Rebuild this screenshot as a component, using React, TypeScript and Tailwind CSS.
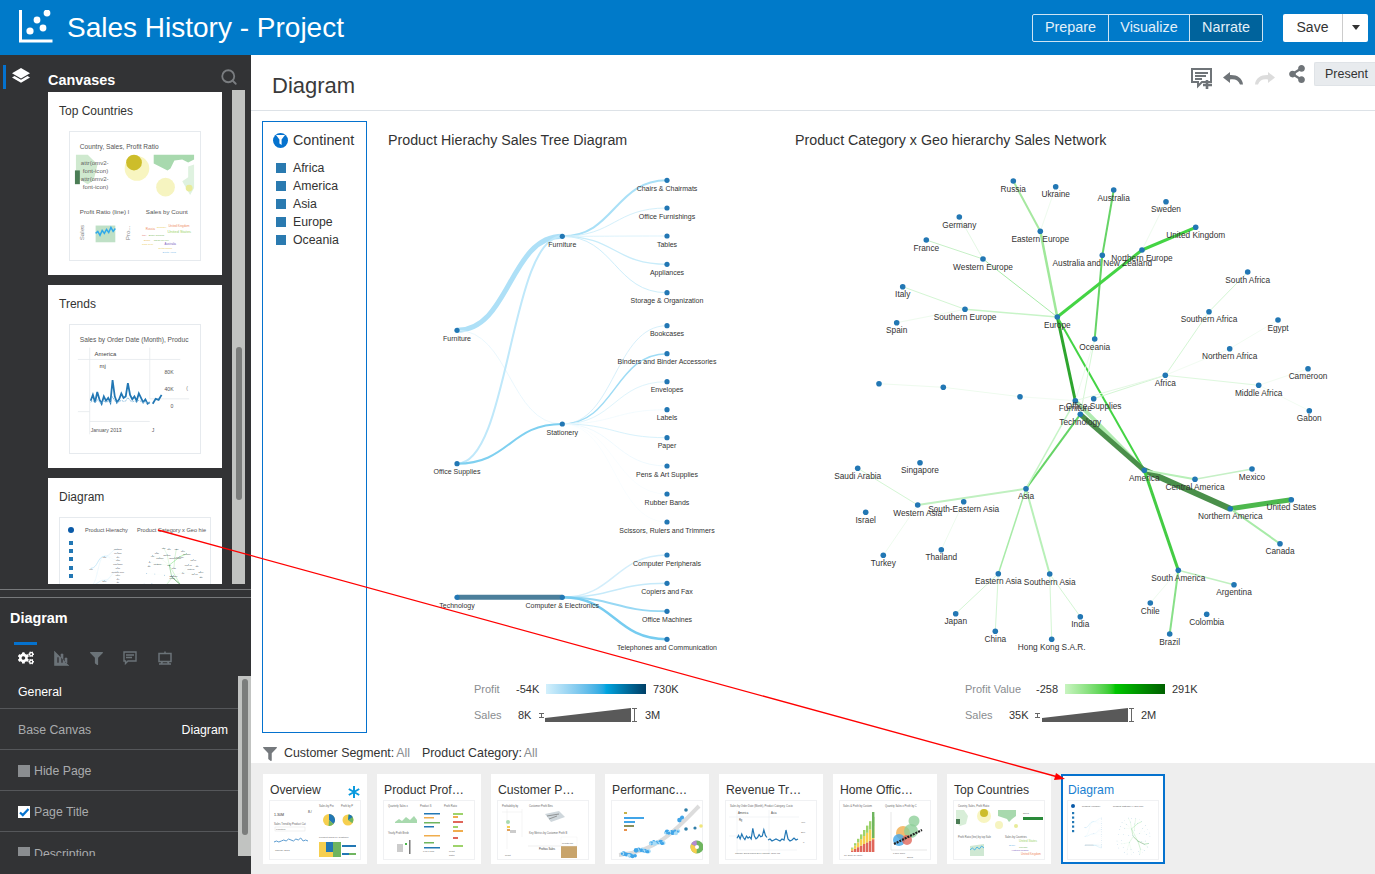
import { FaCogs, FaFilter, FaShareAlt } from "react-icons/fa";
import { Search } from "lucide-react";

type Node = [number, number, string, number?];
type Edge = [number, number, number, number, string, number];

// tree chart, page coordinates
const X0 = 457;
const X1 = 562.3;
const X2 = 667;
const treeRoots: Node[] = [
  [X0, 330.3, "Furniture"],
  [X0, 463.7, "Office Supplies"],
  [X0, 597.3, "Technology"],
];
const treeMiddle: Node[] = [
  [X1, 236.3, "Furniture"],
  [X1, 424, "Stationery"],
  [X1, 597.3, "Computer & Electronics"],
];
const treeLeaves: [number, string, number, string, number][] = [
  [180.3, "Chairs & Chairmats", 0, "#a9e0f7", 2],
  [208, "Office Furnishings", 0, "#d4f0fb", 1],
  [236, "Tables", 0, "#ddf3fc", 1],
  [264.3, "Appliances", 0, "#c8ecfa", 1.3],
  [292.7, "Storage & Organization", 0, "#cdeefb", 1],
  [325.7, "Bookcases", 1, "#d7f0fb", 1],
  [353.7, "Binders and Binder Accessories", 1, "#9fdcf5", 1.5],
  [381.7, "Envelopes", 1, "#def4fc", 1],
  [409.7, "Labels", 1, "#eef9fe", 0.7],
  [437.7, "Paper", 1, "#d8f2fc", 1],
  [466, "Pens & Art Supplies", 1, "#e8f7fd", 0.7],
  [494, "Rubber Bands", 1, "#f2fafe", 0.5],
  [522, "Scissors, Rulers and Trimmers", 1, "#f2fafe", 0.5],
  [555, "Computer Peripherals", 2, "#d3eefb", 1.5],
  [583.3, "Copiers and Fax", 2, "#c6eafa", 1.5],
  [611.3, "Office Machines", 2, "#97d8f4", 2],
  [639.3, "Telephones and Communication", 2, "#76ccf0", 2.5],
];
const treeLinks: [number, number, string, number][] = [
  [0, 0, "#aee0f7", 5],
  [0, 1, "#e4f5fd", 0.8],
  [1, 0, "#bfe8fa", 2],
  [1, 1, "#7fd0f0", 2],
  [2, 2, "#4b7f9b", 5],
];

function curve(x1: number, y1: number, x2: number, y2: number) {
  const mx = (x1 + x2) / 2;
  return `M${x1} ${y1}C${mx} ${y1} ${mx} ${y2} ${x2} ${y2}`;
}

function TreeChart({ labels = true }: { labels?: boolean }) {
  const all: Node[] = [...treeRoots, ...treeMiddle, ...treeLeaves.map((l): Node => [X2, l[0], l[1]])];
  return (
    <g>
      {treeLinks.map(([a, b, c, w], i) => (
        <path key={i} d={curve(X0, treeRoots[a][1], X1, treeMiddle[b][1])} fill="none" stroke={c} strokeWidth={w} />
      ))}
      {treeLeaves.map((l, i) => (
        <path key={i} d={curve(X1, treeMiddle[l[2]][1], X2, l[0])} fill="none" stroke={l[3]} strokeWidth={l[4]} />
      ))}
      {all.map(([x, y, t], i) => (
        <g key={i}>
          <circle cx={x} cy={y} r={2.6} fill="#2277b4" />
          {labels && (
            <text x={x} y={y + 10.5} textAnchor="middle" fontSize={7} fill="#333">
              {t}
            </text>
          )}
        </g>
      ))}
    </g>
  );
}

// network chart, page coordinates: x, y, label
const netNodes: Node[] = [
  [1013.3, 181, "Russia"], [1055.7, 186.7, "Ukraine"], [1113.7, 190, "Australia"], [1166, 201.7, "Sweden"],
  [959.3, 217, "Germany"], [926.3, 240, "France"], [1040.3, 231.3, "Eastern Europe"], [1195.7, 227.3, "United Kingdom"],
  [1142, 250, "Northern Europe"], [1102.3, 255.3, "Australia and New Zealand"], [983, 259, "Western Europe"],
  [1247.7, 272, "South Africa"], [902.7, 286.7, "Italy"], [965, 309.3, "Southern Europe"], [896.7, 322.7, "Spain"],
  [1057.3, 317, "Europe"], [1209, 311.7, "Southern Africa"], [1278, 320, "Egypt"], [1094.7, 339, "Oceania"],
  [1229.7, 348.7, "Northern Africa"], [1308, 368.7, "Cameroon"], [1165.3, 375.3, "Africa"], [1258.7, 385.3, "Middle Africa"],
  [879, 383.7, ""], [943.3, 387.3, ""], [1020, 396.7, ""],
  [1075.3, 400.7, "Furniture"], [1093.7, 398.7, "Office Supplies"], [1080.3, 414.3, "Technology"], [1309.3, 410.7, "Gabon"],
  [857.7, 468.3, "Saudi Arabia"], [920, 462.7, "Singapore"], [1144.3, 470.3, "America"], [1195, 479.3, "Central America"],
  [1252, 469, "Mexico"], [1026, 488.7, "Asia"], [1230.3, 508.7, "Northern America"], [1291.3, 499.7, "United States"],
  [917.7, 505, "Western Asia"], [963.7, 501.7, "South-Eastern Asia"], [865.7, 512.3, "Israel"], [1280, 543.7, "Canada"],
  [941.3, 549.7, "Thailand"], [883.3, 555.3, "Turkey"], [998.3, 573.7, "Eastern Asia"], [1049.7, 574, "Southern Asia"],
  [1178.3, 570.3, "South America"], [1234, 584.7, "Argentina"], [1150.3, 603, "Chile"], [1206.7, 614.3, "Colombia"],
  [955.7, 613.7, "Japan"], [1080.3, 616.7, "India"], [995.3, 631.3, "China"], [1051.7, 639.3, "Hong Kong S.A.R."],
  [1169.7, 634, "Brazil"],
];

const P = (name: string) => netNodes.find((n) => n[2] === name) as Node;
const netLinks: [string, string, string, number][] = [
  ["Eastern Europe", "Russia", "#a6e8a0", 2],
  ["Eastern Europe", "Ukraine", "#eefbee", 1],
  ["Europe", "Eastern Europe", "#a0e89a", 2.5],
  ["Oceania", "Australia and New Zealand", "#66d466", 2],
  ["Australia and New Zealand", "Australia", "#66d466", 2],
  ["Europe", "Northern Europe", "#44d444", 3],
  ["Northern Europe", "United Kingdom", "#44d444", 3],
  ["Northern Europe", "Sweden", "#eefbee", 1],
  ["Europe", "Western Europe", "#a8eba8", 1],
  ["Western Europe", "France", "#c6f0c6", 1],
  ["Western Europe", "Germany", "#e4f8e4", 1],
  ["Europe", "Southern Europe", "#c8f4c8", 1.5],
  ["Southern Europe", "Italy", "#d4f6d4", 1],
  ["Southern Europe", "Spain", "#eefbee", 1],
  ["Europe", "Furniture", "#2ea52e", 3],
  ["Europe", "America", "#44d444", 2],
  ["Furniture", "America", "#b0ecb0", 4],
  ["Technology", "America", "#4a8f4a", 5],
  ["America", "Northern America", "#4a8f4a", 6],
  ["Northern America", "United States", "#4db84d", 5],
  ["Northern America", "Canada", "#a8eba8", 2],
  ["America", "Central America", "#b8f0b8", 2],
  ["Central America", "Mexico", "#c6f0c6", 1.5],
  ["America", "South America", "#44cc44", 3],
  ["South America", "Argentina", "#c0f0c0", 1.5],
  ["South America", "Chile", "#eefbee", 1],
  ["South America", "Brazil", "#88e088", 2],
  ["Technology", "Asia", "#66d466", 2],
  ["Furniture", "Asia", "#c6f4c6", 1.5],
  ["Asia", "Western Asia", "#c0f0c0", 2],
  ["Western Asia", "Saudi Arabia", "#d4f6d4", 1],
  ["Western Asia", "Turkey", "#eefbee", 1],
  ["South-Eastern Asia", "Thailand", "#eefbee", 1],
  ["Asia", "Eastern Asia", "#a8eba8", 1.5],
  ["Asia", "Southern Asia", "#b8f0b8", 2],
  ["Eastern Asia", "Japan", "#d4f6d4", 1],
  ["Eastern Asia", "China", "#d4f6d4", 1],
  ["Southern Asia", "Hong Kong S.A.R.", "#d4f6d4", 1],
  ["Southern Asia", "India", "#d4f6d4", 1],
  ["Oceania", "Technology", "#d4f6d4", 1],
  ["Oceania", "Furniture", "#eefbee", 1],
  ["Africa", "Office Supplies", "#d4f6d4", 1],
  ["Africa", "Furniture", "#e4f8e4", 1],
  ["Africa", "Southern Africa", "#d4f6d4", 1],
  ["Southern Africa", "South Africa", "#d4f6d4", 1],
  ["Africa", "Northern Africa", "#f2fcf2", 1],
  ["Northern Africa", "Egypt", "#f2fcf2", 1],
  ["Africa", "Middle Africa", "#def8de", 1],
  ["Middle Africa", "Cameroon", "#f2fcf2", 1],
  ["Middle Africa", "Gabon", "#f2fcf2", 1],
];

function NetworkChart({ labels = true }: { labels?: boolean }) {
  const extra: Edge[] = [
    [879, 383.7, 943.3, 387.3, "#eefbee", 1],
    [943.3, 387.3, 1020, 396.7, "#eefbee", 1],
    [1020, 396.7, 1075.3, 400.7, "#f2fcf2", 1],
  ];
  return (
    <g>
      {extra.map(([a, b, c, d, s, w], i) => (
        <line key={i} x1={a} y1={b} x2={c} y2={d} stroke={s} strokeWidth={w} />
      ))}
      {netLinks.map(([a, b, s, w], i) => {
        const p = P(a);
        const q = P(b);
        return <line key={i} x1={p[0]} y1={p[1]} x2={q[0]} y2={q[1]} stroke={s} strokeWidth={w} />;
      })}
      {netNodes.map(([x, y], i) => (
        <circle key={i} cx={x} cy={y} r={2.8} fill="#2277b4" />
      ))}
      {labels &&
        netNodes.map(([x, y, t], i) => (
          <text key={i} x={x} y={y + 10.5} textAnchor="middle" fontSize={8.3} fill="#333">
            {t}
          </text>
        ))}
    </g>
  );
}

function jag(x: number, y: number, w: number, vals: number[]) {
  return vals.map((v, i) => `${x + (i * w) / (vals.length - 1)},${y - v}`).join(" ");
}
const wave = [4, 8, 3, 10, 5, 2, 7, 4, 6, 3, 18, 7, 3, 5, 9, 6, 7, 16, 8, 5, 7, 4, 9, 6, 3, 5, 2, 3, 1, 0, 2, 3];

function Tx({ x, y, s = 4, c = "#666", t }: { x: number; y: number; s?: number; c?: string; t: string }) {
  return (
    <text x={x} y={y} fontSize={s} fill={c}>
      {t}
    </text>
  );
}

function TopCountriesBig() {
  return (
    <svg viewBox="0 0 132 130" className="block h-full w-full">
      <Tx x={10} y={17} s={6.7} c="#555" t="Country, Sales, Profit Ratio" />
      <path d="M6 23h12l10 10-4 16-6 4-12-7z" fill="#cfe9cf" />
      <rect x="5" y="39" width="5" height="14" fill="#4b7d55" />
      <Tx x={11} y={34} s={6.2} t="attr(omv2-" />
      <Tx x={13} y={42} s={6.2} t="font-icon)" />
      <Tx x={11} y={50} s={6.2} t="attr(omv2-" />
      <Tx x={13} y={58} s={6.2} t="font-icon)" />
      <circle cx="68" cy="37" r="12.5" fill="#f8f5c0" />
      <circle cx="65" cy="31" r="8" fill="#cdbd2a" />
      <path d="M85 23h41v5l-6 3-6-3-8 1-4 8-3 2-14-7z" fill="#a8d9ae" />
      <path d="M120 35l6-2v24l-4 7-8-14 6-4z" fill="#dff2e0" />
      <circle cx="97" cy="56" r="9.5" fill="#f6f4c0" />
      <circle cx="121" cy="57" r="3.5" fill="#e8eb9a" />
      <Tx x={10} y={83} s={6.3} c="#555" t="Profit Ratio (line) l" />
      <Tx x={77} y={83} s={6.3} c="#555" t="Sales by Count" />
      <text transform="translate(14,110) rotate(-90)" fontSize="6.3" fill="#888">Sales</text>
      <rect x="26" y="95" width="20" height="17" fill="#bfe0c6" />
      <polyline points={jag(26, 104, 20, [1, 3, -1, 4, 1, 5, 2, 7, 3, 6])} fill="none" stroke="#30a9ea" strokeWidth="1.5" />
      <text transform="translate(61,110) rotate(-90)" fontSize="6.3" fill="#888">Pro...</text>
      <Tx x={100} y={96} s={3} c="#ef8a5d" t="United Kingdom" />
      <Tx x={77} y={100} s={3} c="#ef8a5d" t="Russia" />
      <Tx x={88} y={98} s={2.4} c="#e8c84a" t="Germany" />
      <Tx x={99} y={103} s={4} c="#9ed36b" t="United States" />
      <Tx x={73} y={106} s={2.5} c="#e0665a" t="Italy" />
      <Tx x={80} y={106} s={2.5} c="#7cb860" t="Brazil  Canada" />
      <Tx x={75} y={111} s={2.5} c="#e8b74a" t="Spain" />
      <Tx x={85} y={111} s={2.5} c="#7cb860" t="Japan   Mexico" />
      <Tx x={73} y={115} s={2.5} c="#e8c84a" t="India  Peru" />
      <Tx x={96} y={115} s={3} c="#7a5cc0" t="Australia" />
      <Tx x={90} y={119} s={2.5} c="#e8c84a" t="Netherlands" />
      <Tx x={94} y={123} s={2.5} c="#72b5e8" t="South Africa" />
    </svg>
  );
}

function TrendsBig() {
  return (
    <svg viewBox="0 0 132 130" className="block h-full w-full">
      <Tx x={10} y={17} s={6.7} c="#555" t="Sales by Order Date (Month), Produc" />
      <path d="M8 35h104M20 23v88M81 23v52h15M8 88h12M96 75h25M20 98h61" fill="none" stroke="#e4e8ec" strokeWidth="0.8" />
      <Tx x={25} y={31} s={6} c="#444" t="America" />
      <Tx x={30} y={44} s={6} c="#444" t="mj" />
      <polyline points={jag(21, 88, 60, wave.slice(0, 28).map((v) => v * 1.5 + 5))} fill="none" stroke="#2277b4" strokeWidth="1.8" />
      <polyline points={jag(21, 88, 60, wave.slice(0, 28).map((v) => v * 0.4 + 8))} fill="none" stroke="#7fb6dc" strokeWidth="0.9" strokeDasharray="2 1" />
      <polyline points="84,80 87,75 90,76 93,71" fill="none" stroke="#2277b4" strokeWidth="1.8" />
      <Tx x={96} y={50} s={5.2} c="#555" t="80K" />
      <Tx x={96} y={67} s={5.2} c="#555" t="40K" />
      <Tx x={102} y={84} s={5.2} c="#555" t="0" />
      <Tx x={118} y={66} s={5.2} c="#777" t="(" />
      <Tx x={21} y={109} s={5.2} c="#555" t="January 2013" />
      <Tx x={83} y={109} s={5.2} c="#555" t="J" />
    </svg>
  );
}

function DiagramSide() {
  return (
    <svg viewBox="0 0 152 90" className="block h-[90px] w-[152px]">
      <circle cx="11" cy="12" r="3" fill="#0a5aa8" />
      {[23, 31, 39, 48, 56].map((y) => (
        <rect key={y} x="9" y={y} width="4" height="4" fill="#2277b4" />
      ))}
      <Tx x={25} y={14} s={5.6} c="#555" t="Product Hierachy" />
      <Tx x={77} y={14} s={5.6} c="#555" t="Product Category x Geo hie" />
      <g transform="translate(-27.5,8) scale(0.128)">
        <TreeChart />
      </g>
      <g transform="translate(-24,7.2) scale(0.126)">
        <NetworkChart />
      </g>
    </svg>
  );
}

function ThumbFrame({ children }: { children: React.ReactNode }) {
  return (
    <svg viewBox="0 0 92 60" className="mx-auto mt-[1px] block h-[60px] w-[92px]">
      <rect x="0.5" y="0.5" width="91" height="59" fill="#fff" stroke="#f0f1f3" />
      {children}
    </svg>
  );
}

function pieSlice(cx: number, cy: number, r: number, a: number, b: number) {
  const x1 = cx + r * Math.sin(a);
  const y1 = cy - r * Math.cos(a);
  const x2 = cx + r * Math.sin(b);
  const y2 = cy - r * Math.cos(b);
  return `M${cx} ${cy}L${x1} ${y1}A${r} ${r} 0 ${b - a > Math.PI ? 1 : 0} 1 ${x2} ${y2}Z`;
}

function OverviewThumb() {
  return (
    <ThumbFrame>
      <Tx x={5} y={16} s={3.6} c="#333" t="1.30M" />
      <Tx x={39} y={13} s={3.4} c="#333" t="8./" />
      <Tx x={5} y={25} s={2.6} t="Sales Trend by Product Cat" />
      <Tx x={50} y={7} s={2.6} t="Sales by Pro" />
      <Tx x={72} y={7} s={2.6} t="Profit by P" />
      <rect x="6" y="27" width="30" height="4" fill="#fff" stroke="#ddd" strokeWidth="0.4" />
      <Tx x={7} y={30.4} s={2.4} t="Furniture" />
      <polyline points={jag(5, 43, 34, [1, 2, 1, 2, 3, 2, 4, 3, 2, 4, 3, 5, 2, 3, 2])} fill="none" stroke="#5b9bd0" strokeWidth="1" />
      <Tx x={6} y={51} s={2.4} t="January 2013" />
      <circle cx="60" cy="20" r="6" fill="#f6cf4f" />
      <path d={pieSlice(60, 20, 6, 0, 2.3)} fill="#2277b4" />
      <path d={pieSlice(60, 20, 6, 2.3, 3.2)} fill="#6fb55f" />
      <circle cx="79" cy="20" r="5.5" fill="#f6cf4f" />
      <path d={pieSlice(79, 20, 5.5, 0, 2.2)} fill="#6fb55f" />
      <path d={pieSlice(79, 20, 5.5, 0.2, 1)} fill="#2277b4" />
      <Tx x={50} y={38} s={2.5} t="Product Sales by Custome" />
      <rect x="50" y="42" width="36" height="15" fill="#f6cf4f" />
      <rect x="57" y="42" width="7" height="10" fill="#2277b4" />
      <rect x="64" y="42" width="8" height="15" fill="#6fb55f" />
      <rect x="72" y="42" width="15" height="15" fill="#fff" />
      <rect x="73" y="45" width="14" height="2" fill="#2277b4" />
      <rect x="73" y="53" width="14" height="2" fill="#2277b4" />
      <rect x="80" y="53" width="7" height="2" fill="#6fb55f" />
    </ThumbFrame>
  );
}

function ProductThumb() {
  return (
    <ThumbFrame>
      <Tx x={5} y={7} s={2.6} t="Quarterly Sales x" />
      <Tx x={37} y={7} s={2.6} t="Product S" />
      <Tx x={61} y={7} s={2.6} t="Profit Ratio" />
      <path d="M12 22l4-3 3 2 4-4 4 3 4-4 3 4v3H12z" fill="#a8d9ae" />
      <Tx x={5} y={34} s={2.6} t="Yearly Profit Breib" />
      <rect x="14" y="44" width="6" height="8" fill="#ccc" />
      <rect x="26" y="40" width="1.5" height="14" fill="#777" />
      <rect x="22" y="43" width="2" height="2" fill="#4db84d" />
      {[13, 17, 22, 26, 35, 42, 47].map((y, i) => (
        <rect key={y} x="41" y={y} width={i % 2 ? 10 : 16} height="1.5" fill={i % 3 === 0 ? "#2277b4" : i % 3 === 1 ? "#f0ad4e" : "#6fb55f"} />
      ))}
      {[13, 16, 21, 26, 30, 37, 45].map((y, i) => (
        <rect key={y} x="70" y={y} width={i % 2 ? 5 : 10} height="2" fill={i % 3 === 0 ? "#9ed36b" : i % 3 === 1 ? "#f0ad4e" : "#e0665a"} />
      ))}
      <Tx x={40} y={52} s={2.4} t="0.00  1.50k" />
      <Tx x={66} y={52} s={2.4} t="Profit" />
      <Tx x={66} y={56} s={2.4} t="Ratio" />
    </ThumbFrame>
  );
}

function CustomerThumb() {
  return (
    <ThumbFrame>
      <Tx x={5} y={7} s={2.6} t="Profitability by" />
      <Tx x={32} y={7} s={2.6} t="Customer Profit Bins" />
      <path d="M10 9v40M25 9v28M5 12h20" stroke="#e8e8e8" strokeWidth="0.5" fill="none" />
      <circle cx="11" cy="22" r="2" fill="#a8d9ae" />
      <rect x="10" y="26" width="3" height="2" fill="#f6cf4f" />
      <rect x="10" y="29" width="3" height="2" fill="#e0a05a" />
      <rect x="13" y="30" width="6" height="3" fill="#ccc" />
      <path d="M48 14l14-3 6 6-14 5z" fill="#cfd7dc" />
      <path d="M50 16l12-2M52 19l8-3" stroke="#666" strokeWidth="0.6" />
      <Tx x={32} y={34} s={2.6} t="Key Metrics by Customer Profit B" />
      <path d="M31 46h40" stroke="#ddd" strokeWidth="0.5" />
      <Tx x={42} y={50} s={2.6} c="#333" t="Profitas  Sales" />
      <rect x="64" y="46" width="16" height="12" fill="#c8a46b" />
      <rect x="64" y="37" width="16" height="9" fill="#fff" stroke="#eee" strokeWidth="0.4" />
      <Tx x={65} y={44} s={2.4} t="ProfitbyCo" />
      <Tx x={8} y={56} s={2.4} t="Profit" />
    </ThumbFrame>
  );
}

// fixed pseudo-random cloud for the scatter thumbnail
const scatter: [number, number, number][] = Array.from({ length: 70 }, (_, i): [number, number, number] => {
  const t = ((i * 37) % 70) / 70;
  const jitter = (((i * 53) % 17) - 8) * 0.9;
  return [10 + t * 62, 55 - t * t * 28 - t * 4 + jitter * (0.3 + t * 0.6), 0.6 + ((i * 11) % 7) * 0.28];
});

function PerformanceThumb() {
  return (
    <ThumbFrame>
      <path d="M8 55C45 52 65 30 88 6" stroke="#dcdcdc" strokeWidth="4" fill="none" />
      <rect x="13" y="12" width="3" height="2" fill="#c8b24a" />
      <rect x="13" y="17" width="20" height="2" fill="#41a5e8" />
      <rect x="13" y="21" width="11" height="2" fill="#41a5e8" />
      <rect x="13" y="25" width="10" height="2" fill="#8a8f5a" />
      <rect x="13" y="29" width="3" height="2" fill="#e8914a" />
      {scatter.map(([x, y, r], i) => (
        <circle key={i} cx={x} cy={y} r={r} fill={i % 3 === 0 ? "#a8dcf7" : "#41a5e8"} />
      ))}
      <circle cx="75" cy="10" r="1.8" fill="#2f7ea8" />
      <circle cx="84" cy="28" r="1.6" fill="#2f7ea8" />
      <circle cx="75" cy="29" r="1.8" fill="#2f7ea8" />
      <circle cx="90" cy="26" r="1.8" fill="#f0e67a" />
      <circle cx="86" cy="47" r="6.5" fill="#6fb55f" />
      <path d={pieSlice(86, 47, 6.5, 3.2, 5.2)} fill="#f6cf4f" />
      <path d={pieSlice(86, 47, 6.5, 5.2, 6.2)} fill="#b48ad0" />
      <circle cx="86" cy="47" r="2" fill="#fff" />
    </ThumbFrame>
  );
}

function RevenueThumb() {
  return (
    <ThumbFrame>
      <Tx x={5} y={7} s={2.6} t="Sales by Order Date (Month), Product Category, Custo" />
      <path d="M4 17h70M12 10v44M44 10v44M4 36h8M12 50h60" stroke="#e4e8ec" strokeWidth="0.5" fill="none" />
      <Tx x={13} y={14} s={2.8} c="#444" t="America" />
      <Tx x={46} y={14} s={2.8} c="#444" t="Asia" />
      <Tx x={14} y={21} s={2.6} c="#444" t="Rg" />
      <polyline points={jag(12, 42, 30, wave.slice(0, 20).map((v) => v * 0.7 + 1))} fill="none" stroke="#2277b4" strokeWidth="1.2" />
      <polyline points={jag(43, 42, 30, [2, 3, 1, 2, 3, 2, 1, 3, 2, 12, 3, 1, 2, 4, 2, 3])} fill="none" stroke="#2277b4" strokeWidth="1.2" />
      <Tx x={76} y={23} s={2.4} t="40K" />
      <Tx x={76} y={33} s={2.4} t="20K" />
      <Tx x={78} y={43} s={2.4} t="0" />
      <Tx x={10} y={54} s={2.3} t="January 2013  March 2014  January 2017  Ma" />
    </ThumbFrame>
  );
}

function HomeThumb() {
  const cols = ["#e0665a", "#f6cf4f", "#9ed36b"];
  return (
    <ThumbFrame>
      <Tx x={4} y={7} s={2.6} t="Sales & Profit by Custom" />
      <Tx x={46} y={7} s={2.6} t="Quantity Sales x Profit by C" />
      {[0, 1, 2, 3, 4, 5, 6, 7].map((i) => (
        <g key={i}>
          <rect x={12 + i * 3} y={52 - (i + 1) * 1.6} width="2.4" height={(i + 1) * 1.6} fill={cols[0]} />
          <rect x={12 + i * 3} y={52 - (i + 1) * 3.2} width="2.4" height={(i + 1) * 1.6} fill={cols[1]} />
          <rect x={12 + i * 3} y={52 - (i + 1) * 4.4} width="2.4" height={(i + 1) * 1.2} fill={cols[2]} />
        </g>
      ))}
      <rect x="33" y="12" width="2.4" height="26" fill="#6fb55f" />
      <Tx x={5} y={56} s={2.3} t="Q4 2016  Q4 2017" />
      <path d="M52 12v38h36" stroke="#ccc" strokeWidth="0.5" fill="none" />
      <circle cx="75" cy="21" r="5.5" fill="#8ecf9a" opacity="0.8" />
      <circle cx="64" cy="33" r="7" fill="#f0ad4e" opacity="0.8" />
      <circle cx="72" cy="31" r="7" fill="#8ecf9a" opacity="0.8" />
      <circle cx="60" cy="40" r="6" fill="#41a5e8" opacity="0.8" />
      <circle cx="68" cy="40" r="5" fill="#e0665a" opacity="0.8" />
      <path d="M55 44l20-10 8-4" stroke="#222" strokeWidth="2.2" strokeDasharray="2 1" fill="none" />
      <Tx x={54} y={54} s={2.4} t="0  500  1000" />
      <Tx x={68} y={58} s={2.4} t="Sales" />
    </ThumbFrame>
  );
}

function TopThumb() {
  return (
    <ThumbFrame>
      <Tx x={5} y={7} s={2.6} t="Country, Sales, Profit Ratio" />
      <path d="M3 10h8l4 6-2 8-6 2-4-3z" fill="#d8eed8" />
      <rect x="3" y="19" width="4" height="5" fill="#4b7d55" />
      <circle cx="31" cy="16" r="7" fill="#f8f5c0" />
      <circle cx="31" cy="13" r="4" fill="#cdbd2a" />
      <path d="M45 10h18v6l-4 3-3 3-2-3-9-3z" fill="#a8d9ae" />
      <circle cx="46" cy="25" r="4" fill="#f6f4c0" />
      <circle cx="63" cy="26" r="2" fill="#e8eb9a" />
      <Tx x={70} y={14} s={2.4} t="Sales" />
      <rect x="70" y="17" width="20" height="3" fill="#2a8a3a" />
      <Tx x={5} y={38} s={2.6} t="Profit Ratio (line) by top Sale" />
      <Tx x={52} y={38} s={2.6} t="Sales by Countries" />
      <path d="M17 46l14-2v12H17z" fill="#cfe8d3" />
      <polyline points={jag(17, 50, 14, [0, 2, 0, 3, 1, 4, 2])} fill="none" stroke="#30a9ea" strokeWidth="0.8" />
      <Tx x={66} y={42} s={3} c="#9ed36b" t="United States" />
      <Tx x={56} y={46} s={2.4} c="#72b5e8" t="Brazil" />
      <Tx x={66} y={48} s={2.4} c="#7cb860" t="Canada" />
      <Tx x={58} y={51} s={2.4} c="#7a5cc0" t="Australia  Russia" />
      <Tx x={68} y={55} s={2.8} c="#ef8a5d" t="United Kingdom" />
    </ThumbFrame>
  );
}

function DiagramThumb() {
  return (
    <ThumbFrame>
      <circle cx="6" cy="6" r="2" fill="#0a5aa8" />
      {[12, 16.5, 21, 25.5, 30].map((y) => (
        <rect key={y} x="5" y={y} width="2.2" height="2.2" fill="#2277b4" />
      ))}
      <Tx x={15} y={7} s={2.4} c="#555" t="Product Hierachy" />
      <Tx x={46} y={7} s={2.4} c="#555" t="Product Category x Geo hier" />
      <g transform="translate(-18.6,6.3) scale(0.08,0.065)">
        <TreeChart labels={false} />
      </g>
      <g transform="translate(-12.6,3.5) scale(0.073,0.08)">
        <NetworkChart labels={false} />
      </g>
    </ThumbFrame>
  );
}

const bottomCards = [
  { title: "Overview", Thumb: OverviewThumb },
  { title: "Product Prof…", Thumb: ProductThumb },
  { title: "Customer P…", Thumb: CustomerThumb },
  { title: "Performanc…", Thumb: PerformanceThumb },
  { title: "Revenue Tr…", Thumb: RevenueThumb },
  { title: "Home Offic…", Thumb: HomeThumb },
  { title: "Top Countries", Thumb: TopThumb },
];

function IBeam({ h }: { h: number }) {
  return (
    <svg width="7" height={h} viewBox={`0 0 7 ${h}`} className="shrink-0">
      <path d={`M1 .5h5M3.5 .5v${h - 1}M1 ${h - 0.5}h5`} stroke="#666" fill="none" />
    </svg>
  );
}

function SalesRamp() {
  return (
    <svg width="86" height="14" viewBox="0 0 86 14" className="shrink-0">
      <polygon points="0,10 86,0 86,14 0,14" fill="#595959" />
    </svg>
  );
}

function Checkbox({ checked }: { checked?: boolean }) {
  if (checked) {
    return (
      <span className="flex h-3 w-3 items-center justify-center bg-white">
        <svg viewBox="0 0 12 12" className="h-3 w-3">
          <path d="M2 6.5l2.8 2.6L10.5 3" fill="none" stroke="#0572ce" strokeWidth="2.2" />
        </svg>
      </span>
    );
  }
  return <span className="h-3 w-3 bg-[#8a8d90]" />;
}

export default function App() {
  return (
    <div className="relative flex h-[874px] w-[1375px] flex-col overflow-hidden bg-white text-[#333] [font-family:'Liberation_Sans',Arial,sans-serif]">
      {/* Top bar */}
      <header className="flex h-[55px] shrink-0 items-center bg-[#007ac9] pl-[19px] pr-[7px]">
        <svg width="34" height="34" viewBox="0 0 34 34" className="mb-[1px] shrink-0">
          <path d="M1.5 0v31h32" fill="none" stroke="#fff" strokeWidth="3" />
          <circle cx="11" cy="21" r="3.6" fill="#fff" />
          <circle cx="18" cy="10" r="3.4" fill="#fff" />
          <circle cx="24" cy="18" r="3.4" fill="#fff" />
          <circle cx="28" cy="3" r="3.4" fill="#fff" />
        </svg>
        <h1 className="ml-[14px] text-[28px] font-normal text-white">Sales History - Project</h1>
        <div className="ml-auto flex h-[28px] rounded-[2px] border border-[#cfe4f3] text-[14.4px] text-[#e3f0f9]">
          <div className="flex w-[76px] items-center justify-center border-r border-[#cfe4f3]">Prepare</div>
          <div className="flex w-[81px] items-center justify-center border-r border-[#cfe4f3]">Visualize</div>
          <div className="flex w-[72px] items-center justify-center bg-[#00639c]">Narrate</div>
        </div>
        <div className="ml-[20px] flex h-[28px] rounded-[2px] bg-white text-[14px] text-[#333]">
          <div className="flex w-[60px] items-center justify-center border-r border-[#ccc]">Save</div>
          <div className="flex w-[25px] items-center justify-center">
            <span className="h-0 w-0 border-x-[4px] border-t-[5px] border-x-transparent border-t-[#333]" />
          </div>
        </div>
      </header>

      <div className="flex min-h-0 flex-1">
        {/* Left column */}
        <aside className="flex w-[251px] shrink-0 flex-col bg-[#323335]">
          <div className="flex h-[534px] shrink-0">
            <div className="flex w-[48px] shrink-0 items-start pl-[3px] pt-[10px]">
              <span className="h-[24px] w-[3px] bg-[#0572ce]" />
              <svg width="18" height="18" viewBox="0 0 18 18" className="ml-[6px] mt-[3px]">
                <path d="M9 0l9 5.2-9 5.3L0 5.2z" fill="#fff" />
                <path d="M0 9.4l2.5-1.5L9 11.7l6.5-3.8L18 9.4l-9 5.3z" fill="#fff" />
              </svg>
            </div>
            <div className="w-[174px] shrink-0">
              <div className="relative h-[37px]">
                <span className="absolute left-0 top-[16px] text-[14.4px] font-bold leading-[18px] text-white">Canvases</span>
                <Search size={18} strokeWidth={2.4} className="absolute left-[172px] top-[13px] text-[#7a7d80]" />
              </div>
              <div className="flex h-[492px] flex-col gap-[10px] overflow-hidden">
                <div className="h-[183px] shrink-0 bg-white px-[11px] pt-[10px]">
                  <div className="text-[12px] leading-[18px] text-[#333]">Top Countries</div>
                  <div className="ml-[10px] mt-[11px] h-[130px] w-[132px] border border-[#e6eaee]">
                    <TopCountriesBig />
                  </div>
                </div>
                <div className="h-[183px] shrink-0 bg-white px-[11px] pt-[10px]">
                  <div className="text-[12px] leading-[18px] text-[#333]">Trends</div>
                  <div className="ml-[10px] mt-[11px] h-[130px] w-[132px] border border-[#e6eaee]">
                    <TrendsBig />
                  </div>
                </div>
                <div className="h-[183px] shrink-0 bg-white px-[11px] pt-[10px]">
                  <div className="text-[12px] leading-[18px] text-[#333]">Diagram</div>
                  <div className="mt-[11px] w-[152px] border border-[#e6eaee]">
                    <DiagramSide />
                  </div>
                </div>
              </div>
            </div>
            <div className="ml-[10px] mt-[35px] h-[494px] w-[13px] shrink-0 bg-[#c1c3c1] pl-[4px] pt-[257px]">
              <div className="h-[153px] w-[6px] rounded-[3px] bg-[#7b7d7c]" />
            </div>
          </div>

          <div className="h-[9px] shrink-0 border-y border-[#77797b]" />

          <div className="flex min-h-0 flex-1 flex-col">
            <div className="pl-[10px] pt-[11px] text-[14.4px] font-bold leading-[18px] text-white">Diagram</div>
            <div className="ml-[14px] mt-[15px] h-[3px] w-[23px] bg-[#0572ce]" />
            <div className="flex h-[31px] items-center gap-[20px] pb-[5px] pl-[18px] text-[#6b7378]">
              <FaCogs size={16} className="text-white" />
              <svg width="15" height="15" viewBox="0 0 15 15">
                <path d="M.5 0v14.5H15M3 12V6h2v6zM7 12V3h2v9zM11 12V7h2v5z" fill="currentColor" stroke="currentColor" strokeWidth="0.6" />
              </svg>
              <FaFilter size={13} className="ml-[1px]" />
              <svg width="14" height="14" viewBox="0 0 14 14">
                <path d="M1 1h12v9H5l-2.5 2.5V10H1zM3 4h8M3 6.5h6" fill="none" stroke="currentColor" strokeWidth="1.4" />
              </svg>
              <svg width="14" height="14" viewBox="0 0 14 14" className="ml-[1px]">
                <path d="M1 2.5h12v8H1zM7 .5v2M3 13l1.5-2.5M11 13l-1.5-2.5M1 13h12" fill="none" stroke="currentColor" strokeWidth="1.5" />
              </svg>
            </div>
            <div className="flex h-[180px] shrink-0 overflow-hidden">
              <div className="w-[238px] shrink-0 text-[12.3px]">
                <div className="flex h-[33px] items-center border-b border-[#55575a] pl-[18px] text-white">General</div>
                <div className="flex h-[41px] items-center justify-between border-b border-[#55575a] pl-[18px] pr-[10px] pt-[2px] text-[#a9abad]">
                  <span>Base Canvas</span>
                  <span className="text-white">Diagram</span>
                </div>
                <div className="flex h-[41px] items-center gap-[4px] border-b border-[#55575a] pl-[18px] pt-[1px] text-[#a9abad]">
                  <Checkbox />
                  <span className="pt-[2px]">Hide Page</span>
                </div>
                <div className="flex h-[41px] items-center gap-[4px] border-b border-[#55575a] pl-[18px] pt-[1px] text-[#a9abad]">
                  <Checkbox checked />
                  <span className="pt-[2px]">Page Title</span>
                </div>
                <div className="flex h-[41px] items-center gap-[4px] pl-[18px] pt-[1px] text-[#a9abad]">
                  <Checkbox />
                  <span className="pt-[2px]">Description</span>
                </div>
              </div>
              <div className="h-full w-[13px] shrink-0 bg-[#c1c3c1] pl-[4px] pt-[3px]">
                <div className="h-[156px] w-[6px] rounded-[3px] bg-[#7b7d7c]" />
              </div>
            </div>
          </div>
        </aside>

        {/* Main */}
        <main className="flex min-w-0 flex-1 flex-col">
          <div className="flex h-[56px] shrink-0 items-start border-b border-[#dde2e7] pl-[21px] pt-[17px]">
            <h2 className="text-[22px] font-normal leading-[28px] text-[#3a3a3a]">Diagram</h2>
            <div className="ml-auto flex items-start text-[#6f7478]">
              <svg width="22" height="22" viewBox="0 0 22 22" className="mt-[-4px]">
                <path d="M1 1h19v13h-9l-4 4v-4H1zM4 5h13M4 8h11M4 11h7" fill="none" stroke="currentColor" strokeWidth="2" />
                <path d="M16 12v9M12 17h9" stroke="currentColor" strokeWidth="2.6" />
              </svg>
              <svg width="20" height="13" viewBox="0 0 20 13" className="ml-[10px]">
                <path d="M7 0L0 5.5 7 11V7.5c5-.8 8.500.7 10 5h3C19.500 6 14 2.700 7 3z" fill="currentColor" />
              </svg>
              <svg width="20" height="13" viewBox="0 0 20 13" className="ml-[12px] text-[#dcdcdc]">
                <path d="M13 0l7 5.500-7 5.500V7.500c-5-.8-8.500.7-10 5H0C.5 6 6 2.700 13 3z" fill="currentColor" />
              </svg>
              <FaShareAlt size={18} className="ml-[13px] mt-[-7px]" />
              <div className="ml-[8px] mt-[-10px] flex h-[24px] w-[61px] items-center justify-center rounded-l-[2px] border border-r-0 border-[#dfe3e7] bg-[#e8ebee] pl-[3px] text-[12.5px] text-[#333]">
                Present
              </div>
            </div>
          </div>

          <div className="flex h-[631px] shrink-0 pl-[11px] pt-[10px]">
            <div className="h-[612px] w-[105px] shrink-0 border border-[#0572ce] pl-[10px] pt-[9px]">
              <div className="flex items-center gap-[5px]">
                <span className="flex h-[15px] w-[15px] items-center justify-center rounded-full bg-[#0572ce]">
                  <svg width="9" height="10" viewBox="0 0 9 10">
                    <path d="M0 0h9L5.6 4.600V10L3.400 8.400V4.600z" fill="#fff" />
                  </svg>
                </span>
                <span className="text-[14.3px] leading-[18px]">Continent</span>
              </div>
              <ul className="mt-[10px] pl-[3px]">
                {["Africa", "America", "Asia", "Europe", "Oceania"].map((c) => (
                  <li key={c} className="flex h-[18px] items-center gap-[7px] text-[12.3px]">
                    <span className="h-[10px] w-[10px] bg-[#2a7ab0]" />
                    {c}
                  </li>
                ))}
              </ul>
            </div>

            <section className="flex w-[418px] shrink-0 flex-col pl-[21px]">
              <div className="h-[29px] pt-[10px] text-[14.25px] leading-[19px]">Product Hierachy Sales Tree Diagram</div>
              <svg width="397" height="518" viewBox="388 150 397 518" className="block shrink-0 overflow-visible">
                <TreeChart />
              </svg>
              <div className="ml-[86px] mt-[13px] flex h-[16px] items-center text-[11px]">
                <span className="w-[42px] text-[#8a8d90]">Profit</span>
                <span className="w-[30px]">-54K</span>
                <span className="h-[10px] w-[100px] bg-gradient-to-r from-[#d3f0fc] via-[#00a5e0] via-60% to-[#003f66]" />
                <span className="ml-[7px]">730K</span>
              </div>
              <div className="ml-[86px] mt-[10px] flex h-[16px] items-center text-[11px]">
                <span className="w-[44px] text-[#8a8d90]">Sales</span>
                <span className="w-[20px]">8K</span>
                <IBeam h={5} />
                <SalesRamp />
                <IBeam h={14} />
                <span className="ml-[7px]">3M</span>
              </div>
            </section>

            <section className="flex min-w-0 flex-1 flex-col">
              <div className="ml-[10px] h-[29px] pt-[10px] text-[14.25px] leading-[19px]">Product Category x Geo hierarchy Sales Network</div>
              <svg width="590" height="518" viewBox="785 150 590 518" className="block shrink-0 overflow-visible">
                <NetworkChart />
              </svg>
              <div className="ml-[180px] mt-[13px] flex h-[16px] items-center text-[11px]">
                <span className="w-[71px] text-[#8a8d90]">Profit Value</span>
                <span className="w-[29px]">-258</span>
                <span className="h-[10px] w-[100px] bg-gradient-to-r from-[#c8f4c0] via-[#00c800] to-[#006000]" />
                <span className="ml-[7px]">291K</span>
              </div>
              <div className="ml-[180px] mt-[10px] flex h-[16px] items-center text-[11px]">
                <span className="w-[44px] text-[#8a8d90]">Sales</span>
                <span className="w-[25px]">35K</span>
                <IBeam h={5} />
                <span className="ml-[1px]" />
                <SalesRamp />
                <IBeam h={14} />
                <span className="ml-[6px]">2M</span>
              </div>
            </section>
          </div>

          <div className="flex h-[21px] shrink-0 items-center pl-[12px] pt-[2px] text-[12.4px]">
            <FaFilter size={14} className="text-[#75797d]" />
            <span className="ml-[7px]">Customer Segment:</span>
            <span className="ml-[2px] text-[#8a8d90]">All</span>
            <span className="ml-[12px]">Product Category:</span>
            <span className="ml-[2px] text-[#8a8d90]">All</span>
          </div>

          {/* Canvas strip */}
          <div className="flex min-h-0 flex-1 gap-[10px] bg-[#eeeeee] pl-[12px] pt-[11px]">
            {bottomCards.map(({ title, Thumb }, i) => (
              <div key={title} className="relative h-[90px] w-[104px] shrink-0 bg-white pt-[7px]">
                <div className="pl-[7px] text-[12.2px] leading-[18px] text-[#333]">{title}</div>
                <Thumb />
                {i === 0 && (
                  <svg width="12" height="12" viewBox="0 0 12 12" className="absolute right-[7px] top-[12px]">
                    <path d="M6 0v12M.8 3l10.4 6M.8 9l10.4-6" stroke="#0a9ade" strokeWidth="2" />
                  </svg>
                )}
              </div>
            ))}
            <div className="h-[90px] w-[104px] shrink-0 border-2 border-[#0572ce] bg-white pt-[5px]">
              <div className="pl-[5px] text-[12.2px] leading-[18px] text-[#1a80d0]">Diagram</div>
              <div className="-mx-[2px]">
                <DiagramThumb />
              </div>
            </div>
          </div>
        </main>
      </div>

      {/* Red annotation arrow */}
      <svg width="1375" height="874" viewBox="0 0 1375 874" className="pointer-events-none absolute left-0 top-0">
        <line x1="158" y1="530" x2="1058" y2="777" stroke="#ff0000" strokeWidth="1.3" />
        <polygon points="1065,779 1054,780 1056,773" fill="#ff0000" />
      </svg>
    </div>
  );
}
